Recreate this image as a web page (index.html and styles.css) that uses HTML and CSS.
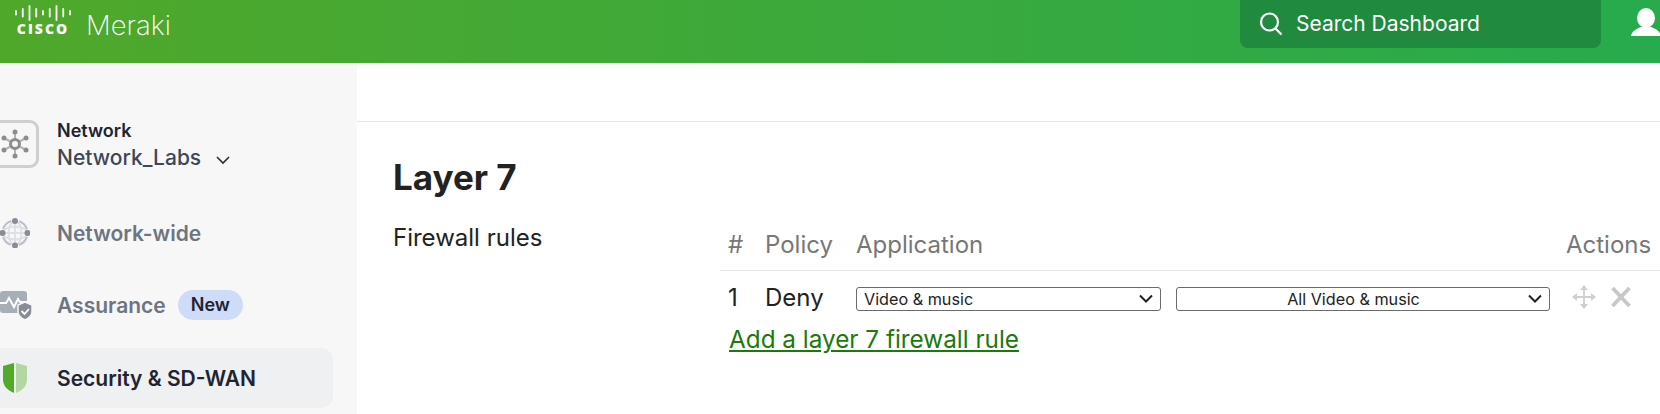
FILE: index.html
```html
<!DOCTYPE html>
<html lang="en">
<head>
<meta charset="utf-8">
<title>Layer 7 firewall rules</title>
<link rel="stylesheet" href="styles.css">
</head>
<body>
<div class="app">
  <header class="topbar">
    <div class="brand">
      <div class="cisco">
        <svg class="cisco-bars" width="56" height="17" viewBox="0 0 56 17" aria-hidden="true">
          <g stroke="#fff" stroke-width="1.800" stroke-linecap="round">
            <path d="M1 6v3.500M7.750 4v7.500M14.500 1v14M21.250 4v7.500M28 6v3.500M34.750 4v7.500M41.500 1v14M48.250 4v7.500M55 6v3.500" />
          </g>
        </svg>
        <span class="cisco-word">cisco</span>
      </div>
      <span class="meraki">Meraki</span>
    </div>
    <div class="search">
      <svg width="24" height="24" viewBox="0 0 24 24" fill="none" stroke="#fff" stroke-width="2.200" aria-hidden="true">
        <circle cx="10.500" cy="10" r="8.500"/><path d="M16.500 16.500l6 6"/>
      </svg>
      <span class="search-text">Search Dashboard</span>
    </div>
    <svg class="user" width="30" height="30" viewBox="0 0 30 30" fill="#fff" aria-hidden="true">
      <ellipse cx="15" cy="10" rx="9" ry="10"/><path d="M0 28c1-5 5-7 10-9h10c5 2 9 4 10 9z"/>
    </svg>
  </header>
  <div class="body">
    <aside class="sidebar">
      <div class="network">
        <div class="network-icon">
          <svg width="30" height="30" viewBox="0 0 30 30" aria-hidden="true">
            <g stroke="#b4b4b4" stroke-width="2"><path d="M15 3v24M4 9l22 12M26 9L4 21"/></g>
            <g fill="#8d8d8d"><circle cx="15" cy="3" r="2.500"/><circle cx="15" cy="27" r="2.500"/><circle cx="4" cy="9" r="2.500"/><circle cx="26" cy="9" r="2.500"/><circle cx="4" cy="21" r="2.500"/><circle cx="26" cy="21" r="2.500"/></g>
            <circle cx="15" cy="15" r="4.500" fill="#f7f7f7" stroke="#8d8d8d" stroke-width="3"/>
          </svg>
        </div>
        <div class="network-text">
          <div class="network-label">Network</div>
          <div class="network-name">Network_Labs
            <svg class="chev" width="14" height="9" viewBox="0 0 14 9" fill="none" stroke="#2a2d33" stroke-width="1.600" aria-hidden="true"><path d="M1 1l6 6 6-6"/></svg>
          </div>
        </div>
      </div>
      <nav class="nav">
        <div class="nav-item muted">
          <span class="nav-icon">
            <svg width="30" height="30" viewBox="0 0 30 30" fill="none" aria-hidden="true">
              <circle cx="15" cy="15" r="12.500" stroke="#bcc0c7" stroke-width="2.200" stroke-dasharray="11.500 8.130" stroke-dashoffset="-4"/>
              <ellipse cx="15" cy="15" rx="6.500" ry="12" stroke="#dcdfe3" stroke-width="1.800"/>
              <ellipse cx="15" cy="15" rx="12" ry="6.500" stroke="#dcdfe3" stroke-width="1.800"/>
              <path d="M3 15h24M15 3v24" stroke="#dcdfe3" stroke-width="1.800"/>
              <g fill="#868d97"><circle cx="15" cy="3" r="3"/><circle cx="15" cy="27.500" r="3"/><circle cx="2.500" cy="15" r="3"/><circle cx="27.500" cy="15" r="3"/></g>
            </svg>
          </span>
          <span>Network-wide</span>
        </div>
        <div class="nav-item muted">
          <span class="nav-icon">
            <svg width="32" height="30" viewBox="0 0 32 30" fill="none" aria-hidden="true">
              <rect x="0" y="1" width="27" height="22" rx="3" fill="#a8aeb6"/>
              <path d="M0 13h6l3-5 5 9 4-8 2 3h7" stroke="#fff" stroke-width="2"/>
              <path d="M25 12l7 3v7c0 4-3 6-7 8-4-2-7-4-7-8v-7z" fill="#868d97" stroke="#f7f7f7" stroke-width="1.500"/>
              <path d="M21.500 21l3 3 4.500-5" stroke="#fff" stroke-width="1.800"/>
            </svg>
          </span>
          <span>Assurance</span>
          <span class="pill">New</span>
        </div>
        <div class="nav-item active">
          <span class="nav-icon">
            <svg width="24" height="30" viewBox="0 0 24 30" aria-hidden="true">
              <path d="M11 0v30C4 27 0 23 0 16V3z" fill="#53a928"/>
              <path d="M13 0v30c7-3 11-7 11-14V3z" fill="#b3d7a2"/>
            </svg>
          </span>
          <span>Security &amp; SD-WAN</span>
        </div>
      </nav>
    </aside>
    <main class="main">
      <div class="strip"></div>
      <div class="content">
        <h1 class="title">Layer 7</h1>
        <section class="rules">
          <div class="rules-label">Firewall rules</div>
          <div class="rules-body">
            <table class="rules-table">
              <thead>
                <tr><th class="c-num">#</th><th class="c-policy">Policy</th><th class="c-app">Application</th><th class="c-act">Actions</th></tr>
              </thead>
              <tbody>
                <tr>
                  <td>1</td>
                  <td>Deny</td>
                  <td>
                    <div class="selects">
                      <select class="sel sel-a"><option>Video &amp; music</option></select>
                      <select class="sel sel-b"><option>All Video &amp; music</option></select>
                    </div>
                  </td>
                  <td>
                    <div class="actions">
                      <svg width="24" height="24" viewBox="0 0 24 24" fill="none" stroke="#cfcfcf" stroke-width="1.800" aria-hidden="true">
                        <path d="M12 1v22M1 12h22"/>
                        <path d="M12 0l-4 5h8zM12 24l-4-5h8zM0 12l5-4v8zM24 12l-5-4v8z" fill="#cfcfcf" stroke="none"/>
                      </svg>
                      <svg width="20" height="20" viewBox="0 0 20 20" fill="none" stroke="#c8c8c8" stroke-width="3.800" aria-hidden="true"><path d="M1.500 1l17 18M18.500 1L1.500 19"/></svg>
                    </div>
                  </td>
                </tr>
              </tbody>
            </table>
            <a class="add-link" href="#">Add a layer 7 firewall rule</a>
          </div>
        </section>
      </div>
    </main>
  </div>
</div>
</body>
</html>
```
FILE: styles.css
```css
* { box-sizing: border-box; }
html, body { margin: 0; height: 100%; overflow: hidden; background: #fff; }
body { font-family: Inter, "Liberation Sans", sans-serif; color: #222; }
.app { display: flex; flex-direction: column; height: 414px; }

.topbar {
  flex: 0 0 63px;
  display: flex;
  align-items: flex-start;
  background: linear-gradient(90deg, #50a82a 0%, #27ab4d 100%);
  padding-left: 15px;
  color: #fff;
  overflow: hidden;
}
.brand { display: flex; align-items: flex-start; gap: 15px; padding-top: 5px; }
.cisco { display: flex; flex-direction: column; align-items: center; width: 56px; }
.cisco-bars { display: block; }
.cisco-word { font-family: "Open Sans", sans-serif; font-weight: 800; font-size: 14px; line-height: 14px; letter-spacing: 2px; text-transform: uppercase; }
.meraki { font-weight: 200; font-size: 27.500px; line-height: 38px; margin-top: 1px; }
.search {
  margin-left: auto;
  width: 361px;
  height: 48px;
  background: #208a3f;
  border-radius: 0 0 8px 8px;
  display: flex;
  align-items: center;
  gap: 13px;
  padding-left: 19px;
  font-size: 21px;
}
.search-text { padding-bottom: 2px; }
.user { margin: 8px -1px 0 30px; flex: none; }

.body { flex: 1; display: flex; min-height: 0; }
.sidebar { flex: 0 0 357px; background: #f7f7f7; padding: 57px 24px 0 0; overflow: hidden; }
.network { display: flex; align-items: center; height: 48px; }
.network-icon {
  flex: none;
  width: 49px;
  height: 48px;
  margin-left: -10px;
  margin-right: 18px;
  border: 3px solid #cfcfcf;
  border-radius: 9px;
  display: flex;
  align-items: center;
  justify-content: flex-end;
  padding-right: 6px;
}
.network-text { padding-top: 4px; }
.network-label { font-size: 18px; font-weight: 600; line-height: 20px; color: #1e2430; }
.network-name { font-size: 21px; font-weight: 500; line-height: 28px; color: #3f4654; margin-top: 3px; }
.chev { margin-left: 9px; }

.nav { display: flex; flex-direction: column; gap: 12px; margin-top: 35px; }
.nav-item { height: 60px; display: flex; align-items: center; font-size: 21px; font-weight: 600; border-radius: 0 12px 12px 0; }
.nav-icon { flex: 0 0 57px; display: flex; align-items: center; }
.nav-item.muted { color: #6e7580; }
.nav-item.active { color: #1f2430; background: #eff0f2; margin-top: 1px; }
.active .nav-icon { padding-left: 3px; }
.pill { margin-left: 12px; background: #cfdcf8; color: #1f2430; font-size: 18px; line-height: 30px; padding: 0 13px; border-radius: 15px; }

.main { flex: 1; min-width: 0; }
.strip { height: 59px; border-bottom: 1px solid #e6e6e6; }
.content { padding: 33px 0 0 36px; }
.title { margin: 0; font-size: 35px; font-weight: 700; line-height: 44px; color: #222; }
.rules { display: flex; margin-top: 21px; }
.rules-label { flex: 0 0 327px; font-size: 24px; line-height: 36px; }
.rules-body { flex: 1; min-width: 0; font-size: 24px; }
.rules-table { width: 100%; border-collapse: collapse; font-size: 24px; }
.rules-table th { font-weight: 400; color: #777; text-align: left; height: 50px; padding: 0 0 0 8px; border-bottom: 1px solid #e6e6e6; }
.rules-table td { padding: 0 0 0 8px; height: 54px; }
.c-num { width: 37px; }
.c-policy { width: 91px; }
.c-act { width: 102px; }
.selects { display: flex; gap: 15px; padding-top: 3px; }
.sel {
  appearance: none;
  height: 24px;
  font-family: Inter, sans-serif;
  font-size: 16.200px;
  background: #fff url("data:image/svg+xml,%3Csvg xmlns='http://www.w3.org/2000/svg' width='14' height='9' viewBox='0 0 14 9'%3E%3Cpath d='M1 1.500l6 6 6-6' fill='none' stroke='%23222' stroke-width='2'/%3E%3C/svg%3E") no-repeat right 7px center;
  color: #222;
  border: 1px solid #6b6b6b;
  border-radius: 3px;
  padding: 0 26px 0 7px;
}
.sel-a { width: 305px; }
.sel-b { width: 374px; text-align: center; }
.actions { display: flex; align-items: center; gap: 15px; padding-left: 6px; }
.add-link { display: inline-block; margin-left: 9px; margin-top: 2px; color: #1a7a0a; font-size: 24.300px; line-height: 26px; }
```
